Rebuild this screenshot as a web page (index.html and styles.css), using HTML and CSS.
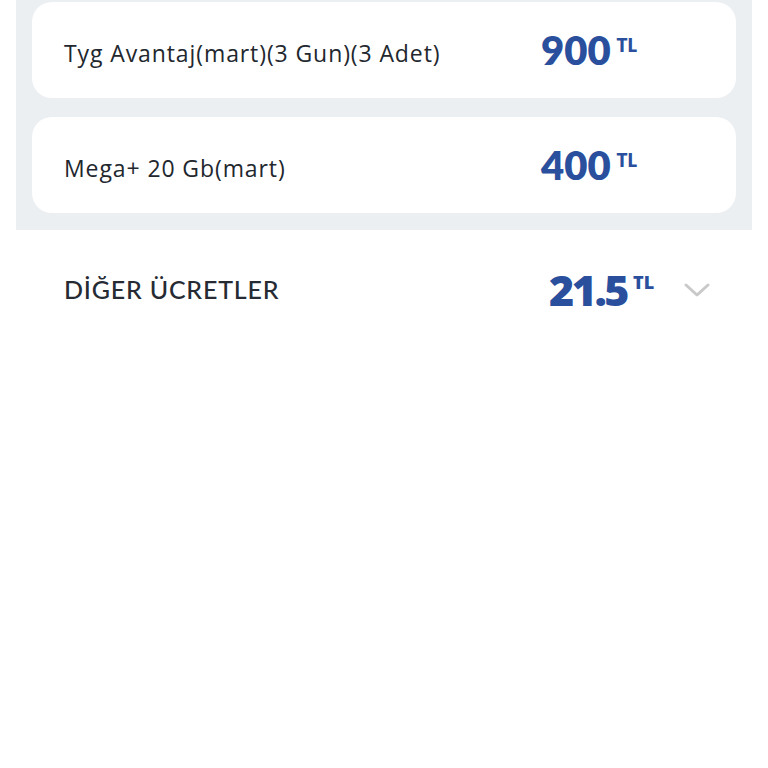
FILE: index.html
```html
<!DOCTYPE html>
<html lang="tr">
<head>
<meta charset="utf-8">
<link rel="stylesheet" href="styles.css">
</head>
<body>
<div class="panel">
  <div class="card">
    <span class="label">Tyg Avantaj(mart)(3 Gun)(3 Adet)</span>
    <span class="price"><span class="amount">900</span><span class="cur">TL</span></span>
  </div>
  <div class="card">
    <span class="label">Mega+ 20 Gb(mart)</span>
    <span class="price"><span class="amount">400</span><span class="cur">TL</span></span>
  </div>
</div>
<div class="other">
  <span class="other-label">DİĞER ÜCRETLER</span>
  <span class="other-price"><span class="amount big">21.5</span><span class="cur">TL</span></span>
  <svg class="chev" width="26" height="16" viewBox="0 0 26 16"><path d="M2 3 L13 13 L24 3" fill="none" stroke="#c9c9c9" stroke-width="3" stroke-linecap="round" stroke-linejoin="round"/></svg>
</div>
</body>
</html>
```
FILE: styles.css
```css
html, body { margin: 0; padding: 0; background: #fff; }
body { font-family: "Open Sans", "Liberation Sans", sans-serif; color: #22272e; }
.panel {
  margin: 0 16px;
  background: #eceff2;
  padding: 2px 16px 17px;
  display: flex;
  flex-direction: column;
  gap: 19px;
}
.card {
  background: #fff;
  border-radius: 20px;
  height: 96px;
  display: flex;
  align-items: center;
  padding-left: 32px;
}
.label { font-size: 23px; width: 477px; letter-spacing: 0.9px; margin-top: 5px; }
.price { display: flex; align-items: flex-start; color: #2a4f9d; font-family: "Lato", sans-serif; }
.amount { font-size: 40px; font-weight: 800; letter-spacing: 0px; line-height: 1; }
.cur { font-size: 18px; font-weight: 800; margin-left: 6px; margin-top: 6px; line-height: 1; }
.other {
  display: flex;
  align-items: center;
  height: 118px;
  padding-left: 64px;
}
.other-label { font-size: 25px; letter-spacing: 0.8px; width: 485px; font-weight: 500; color: #262b33; font-family: "Lato", sans-serif; }
.other-price { display: flex; align-items: flex-start; color: #2a4f9d; }
.amount.big { font-size: 43px; letter-spacing: -2.5px; }
.other-price .cur { margin-top: 5px; margin-left: 6px; }
.chev { margin-left: 30px; margin-top: 2px; }
```
